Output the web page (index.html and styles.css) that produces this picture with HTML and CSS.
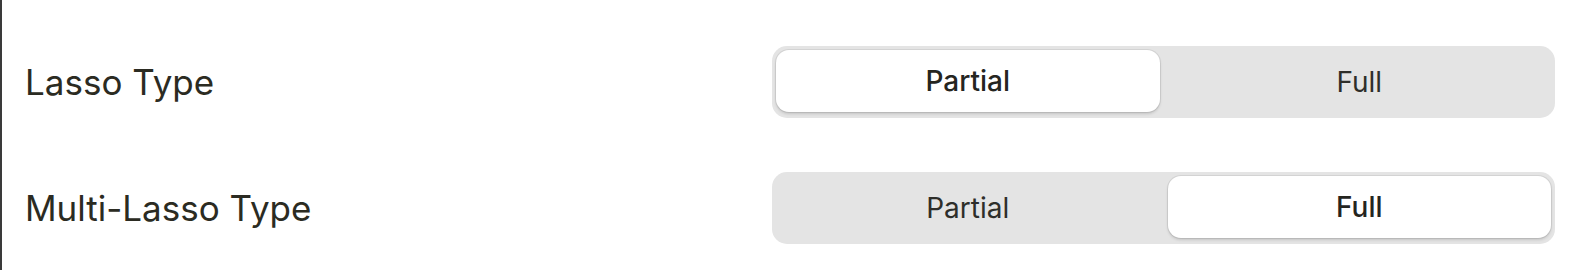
FILE: index.html
```html
<!DOCTYPE html>
<html>
<head>
<meta charset="utf-8">
<link rel="stylesheet" href="styles.css">
</head>
<body>
<div class="panel">
  <div class="row">
    <div class="label">Lasso Type</div>
    <div class="seg">
      <div class="opt selected">Partial</div>
      <div class="opt">Full</div>
    </div>
  </div>
  <div class="row">
    <div class="label">Multi-Lasso Type</div>
    <div class="seg">
      <div class="opt">Partial</div>
      <div class="opt selected">Full</div>
    </div>
  </div>
</div>
</body>
</html>
```
FILE: styles.css
```css
html, body {
  margin: 0;
  padding: 0;
  background: #ffffff;
}
body {
  font-family: "Inter", "Liberation Sans", sans-serif;
  color: #2c2c24;
}
.panel {
  height: 270px;
  box-sizing: border-box;
  border-left: 2px solid #3a3a3a;
  padding: 46px 15px 0 23px;
  display: flex;
  flex-direction: column;
  gap: 54px;
}
.row {
  display: flex;
  align-items: center;
  justify-content: space-between;
  height: 72px;
}
.label {
  font-size: 35px;
  font-weight: 400;
  color: #2b2b22;
}
.seg {
  width: 783px;
  height: 72px;
  box-sizing: border-box;
  background: #e4e4e4;
  border-radius: 15px;
  padding: 4px;
  display: flex;
  gap: 8px;
}
.opt {
  flex: 1;
  display: flex;
  align-items: center;
  justify-content: center;
  font-size: 28px;
  font-weight: 400;
  color: #2e2e2a;
  border-radius: 13px;
}
.opt.selected {
  background: #ffffff;
  font-weight: 500;
  color: #25251f;
  margin-bottom: 2px;
  box-shadow: 0 0 0 1px rgba(0,0,0,0.07), 0 2px 3px rgba(0,0,0,0.14);
}
```
